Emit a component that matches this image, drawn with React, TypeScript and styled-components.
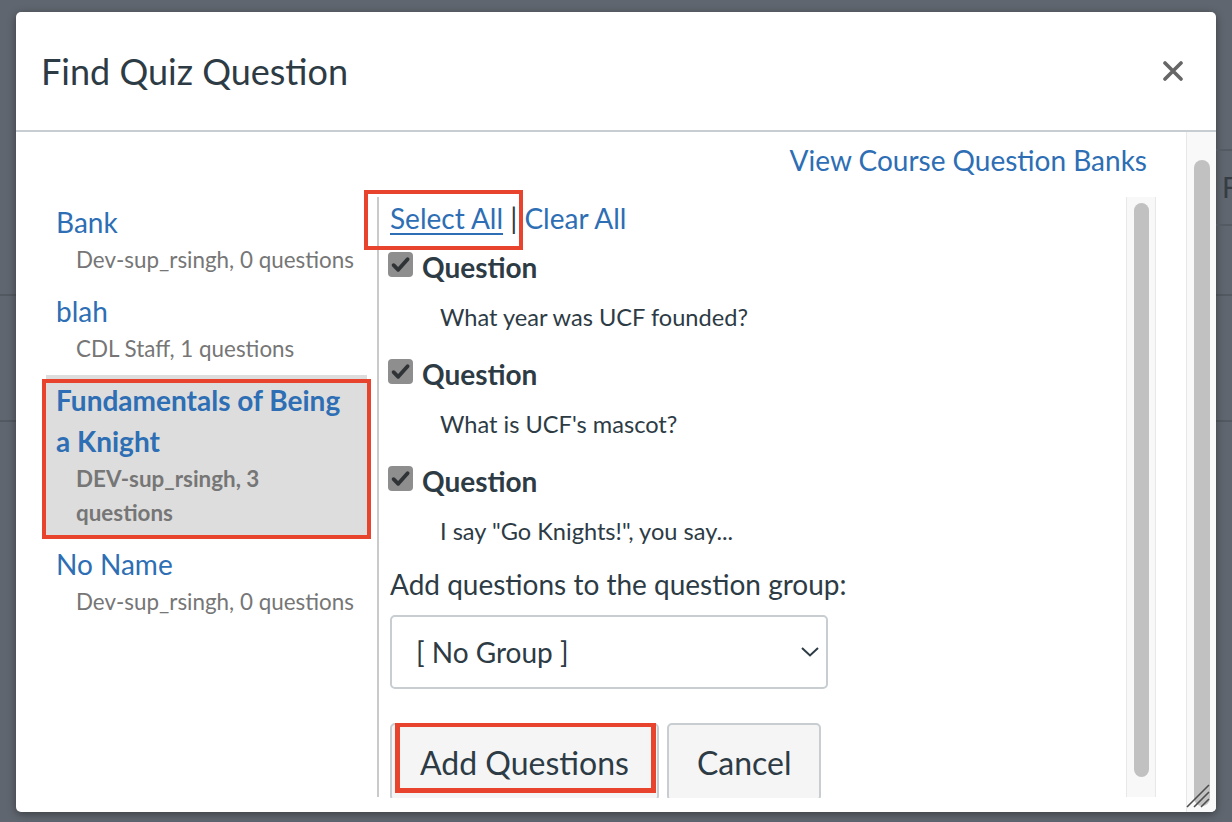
import React from 'react';
import styled, { createGlobalStyle } from 'styled-components';

type BankData = {
  name: string;
  meta: string;
  selected?: boolean;
};

const banks: BankData[] = [
  { name: 'Bank', meta: 'Dev-sup_rsingh, 0 questions' },
  { name: 'blah', meta: 'CDL Staff, 1 questions' },
  { name: 'Fundamentals of Being a Knight', meta: 'DEV-sup_rsingh, 3 questions', selected: true },
  { name: 'No Name', meta: 'Dev-sup_rsingh, 0 questions' },
];

const questions = [
  'What year was UCF founded?',
  "What is UCF's mascot?",
  'I say "Go Knights!", you say...',
];

const CheckIcon = () => (
  <svg width="25" height="25" viewBox="0 0 25 25">
    <path d="M5.6 13.2 L10.2 17.8 L19.6 7.2" fill="none" stroke="#2f3336" strokeWidth="3.8" strokeLinecap="round" strokeLinejoin="round" />
  </svg>
);

const CloseIcon = () => (
  <svg width="20" height="20" viewBox="0 0 20 20">
    <path d="M2 2 L18 18 M18 2 L2 18" stroke="#666" strokeWidth="3.6" strokeLinecap="round" />
  </svg>
);

const ChevronIcon = () => (
  <svg width="18" height="10" viewBox="0 0 18 10">
    <polyline points="1,1 9,8.5 17,1" fill="none" stroke="#2d3b45" strokeWidth="2" />
  </svg>
);

const GripIcon = () => (
  <svg width="24" height="24" viewBox="0 0 24 24">
    <path d="M1 23 L23 1 M8 23 L23 8 M15 23 L23 15" stroke="#4d4d4d" strokeWidth="1.6" />
  </svg>
);

export default function App() {
  return (
    <>
      <GlobalStyle />
      <Page>
        <Dialog>
          <Header>
            <Title>Find Quiz Question</Title>
            <CloseButton aria-label="Close">
              <CloseIcon />
            </CloseButton>
          </Header>
          <Body>
            <Content>
              <BanksLinkRow>
                <Link>View Course Question Banks</Link>
              </BanksLinkRow>
              <Main>
                <BankList>
                  {banks.map((bank) => (
                    <BankItem key={bank.name} $selected={bank.selected}>
                      <BankName $selected={bank.selected}>{bank.name}</BankName>
                      <BankMeta $selected={bank.selected}>{bank.meta}</BankMeta>
                      {bank.selected && <Callout $top={4} $left={-4} $width={329} $height={160} />}
                    </BankItem>
                  ))}
                </BankList>
                <QuestionPane>
                  <PaneContent>
                    <Toolbar>
                      <UnderlinedLink>Select All</UnderlinedLink> | <Link>Clear All</Link>
                      <Callout $top={-7} $left={-26} $width={159} $height={60} />
                    </Toolbar>
                    {questions.map((q) => (
                      <QuestionItem key={q}>
                        <QuestionHead>
                          <Checkbox>
                            <CheckIcon />
                          </Checkbox>
                          <QuestionTitle>Question</QuestionTitle>
                        </QuestionHead>
                        <QuestionText>{q}</QuestionText>
                      </QuestionItem>
                    ))}
                    <GroupLabel>Add questions to the question group:</GroupLabel>
                    <SelectBox>
                      <span>[ No Group ]</span>
                      <ChevronIcon />
                    </SelectBox>
                    <ButtonRow>
                      <Button>
                        Add Questions
                        <Callout $top={-3} $left={3} $width={261} $height={71} $thick={5} />
                      </Button>
                      <Button>Cancel</Button>
                    </ButtonRow>
                  </PaneContent>
                  <InnerTrack>
                    <Thumb />
                  </InnerTrack>
                </QuestionPane>
              </Main>
            </Content>
            <OuterTrack>
              <Thumb />
              <Grip>
                <GripIcon />
              </Grip>
            </OuterTrack>
          </Body>
        </Dialog>
        <Peek>
          <PeekRow>F</PeekRow>
        </Peek>
      </Page>
    </>
  );
}

const GlobalStyle = createGlobalStyle`
  html, body {
    margin: 0;
    padding: 0;
    overflow: hidden;
  }
  body {
    background: #60666f;
    font-family: Lato, "Open Sans", "Noto Sans", sans-serif;
    color: #2d3b45;
  }
  * {
    box-sizing: border-box;
  }
`;

const Page = styled.div`
  display: flex;
  align-items: flex-start;
  width: 1232px;
  height: 822px;
  padding: 12px 0 0 16px;
  background: linear-gradient(
    to bottom,
    transparent 294px,
    #535961 294px,
    #535961 296px,
    transparent 296px,
    transparent 420px,
    #535961 420px,
    #535961 422px,
    transparent 422px
  );
`;

const Dialog = styled.div`
  flex: none;
  width: 1200px;
  height: 800px;
  background: #fff;
  border-radius: 5px;
  box-shadow: 0 2px 8px rgba(0, 0, 0, 0.4);
  display: flex;
  flex-direction: column;
  overflow: hidden;
`;

const Peek = styled.div`
  flex: none;
  width: 16px;
  overflow: hidden;
  padding-top: 137px;
`;

const PeekRow = styled.div`
  height: 77px;
  border-top: 2px solid #545a62;
  border-bottom: 2px solid #545a62;
  padding-left: 6px;
  line-height: 73px;
  font-size: 28px;
  color: #363c44;
  white-space: nowrap;
`;

const Header = styled.header`
  flex: none;
  height: 120px;
  border-bottom: 2px solid #c7cdd1;
  display: flex;
  align-items: center;
  justify-content: space-between;
  padding: 0 33px 0 25px;
`;

const Title = styled.h2`
  margin: 0;
  font-size: 36px;
  font-weight: 400;
  color: #2d3b45;
`;

const CloseButton = styled.button`
  border: none;
  background: none;
  padding: 0;
  width: 20px;
  height: 20px;
  display: flex;
`;

const Body = styled.div`
  flex: 1;
  min-height: 0;
  display: flex;
`;

const Content = styled.div`
  flex: 1;
  min-width: 0;
  display: flex;
  flex-direction: column;
  padding: 8px 30px 15px 25px;
`;

const BanksLinkRow = styled.div`
  text-align: right;
  line-height: 41px;
  font-size: 28px;
  padding-right: 9px;
  margin-bottom: 16px;
`;

const Link = styled.a`
  color: #2d6eb4;
  text-decoration: none;
  cursor: pointer;
`;

const UnderlinedLink = styled(Link)`
  text-decoration: underline;
  text-decoration-thickness: 2px;
  text-underline-offset: 4px;
`;

const Main = styled.div`
  flex: 1;
  min-height: 0;
  display: flex;
`;

const BankList = styled.ul`
  flex: none;
  width: 336px;
  margin: 0;
  padding: 0;
  list-style: none;
`;

const BankItem = styled.li<{ $selected?: boolean }>`
  position: relative;
  margin: 0 10px 4px 5px;
  padding: 5px 6px 5px 10px;
  background: ${({ $selected }) => ($selected ? '#dddddd' : 'transparent')};
`;

const BankName = styled.div<{ $selected?: boolean }>`
  font-size: 28px;
  line-height: 41px;
  color: #2d6eb4;
  font-weight: ${({ $selected }) => ($selected ? 700 : 400)};
`;

const BankMeta = styled.div<{ $selected?: boolean }>`
  padding-left: 20px;
  font-size: 22.4px;
  line-height: 34px;
  color: #767676;
  font-weight: ${({ $selected }) => ($selected ? 700 : 400)};
`;

const Callout = styled.span<{ $top: number; $left: number; $width: number; $height: number; $thick?: number }>`
  position: absolute;
  top: ${({ $top }) => $top}px;
  left: ${({ $left }) => $left}px;
  width: ${({ $width }) => $width}px;
  height: ${({ $height }) => $height}px;
  border: ${({ $thick }) => $thick ?? 4}px solid #e8432d;
  pointer-events: none;
`;

const QuestionPane = styled.section`
  flex: 1;
  min-width: 0;
  display: flex;
  border-left: 2px solid #cacaca;
`;

const PaneContent = styled.div`
  flex: 1;
  min-width: 0;
  padding-left: 11px;
`;

const Toolbar = styled.div`
  position: relative;
  font-size: 28px;
  line-height: 41px;
  padding-top: 1px;
  margin-bottom: 7px;
  color: #2d3b45;
`;

const QuestionItem = styled.div`
  display: flex;
  flex-direction: column;
`;

const QuestionHead = styled.div`
  display: flex;
  align-items: center;
  gap: 9px;
  height: 41px;
`;

const Checkbox = styled.span`
  width: 25px;
  height: 25px;
  margin-left: -2px;
  margin-top: -4px;
  border-radius: 4px;
  background: #8e8e8e;
  display: flex;
`;

const QuestionTitle = styled.span`
  font-size: 28px;
  font-weight: 700;
  color: #2d3b45;
`;

const QuestionText = styled.div`
  padding: 15px 0 20px 50px;
  font-size: 23.6px;
  line-height: 31px;
  color: #2d3b45;
`;

const GroupLabel = styled.div`
  margin-top: -3px;
  font-size: 28px;
  line-height: 41px;
  color: #2d3b45;
`;

const SelectBox = styled.div`
  margin-top: 10px;
  width: 438px;
  height: 74px;
  border: 2px solid #c7cdd1;
  border-radius: 5px;
  display: flex;
  align-items: center;
  justify-content: space-between;
  padding: 0 7px 0 24px;
  font-size: 28px;
  color: #2d3b45;
`;

const ButtonRow = styled.div`
  display: flex;
  align-items: flex-start;
  gap: 8px;
  height: 75px;
  margin-top: 34px;
  overflow: hidden;
`;

const Button = styled.button`
  position: relative;
  flex: none;
  height: 78px;
  padding: 0 28px;
  border: 2px solid #c7cdd1;
  border-radius: 5px;
  background: #f5f5f5;
  font-family: inherit;
  font-size: 32px;
  color: #2d3b45;
`;

const InnerTrack = styled.div`
  flex: none;
  width: 30px;
  display: flex;
  background: #f8f8f8;
  border-left: 1px solid #e8e8e8;
  border-right: 1px solid #e8e8e8;
  padding: 6px 6px 20px 7px;
`;

const Thumb = styled.div`
  flex: 1;
  width: 16px;
  border-radius: 8px;
  background: #c1c1c1;
`;

const OuterTrack = styled.div`
  position: relative;
  flex: none;
  width: 30px;
  display: flex;
  background: #f9f9f9;
  border-left: 1px solid #e8e8e8;
  padding: 28px 6px 6px 7px;
`;

const Grip = styled.div`
  position: absolute;
  right: 6px;
  bottom: 4px;
  width: 24px;
  height: 24px;
  display: flex;
`;
